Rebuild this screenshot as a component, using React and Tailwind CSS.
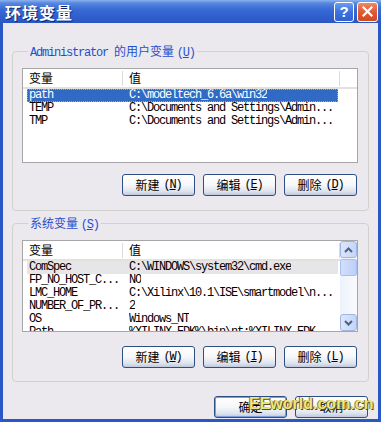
import React from 'react';

const mono = "font-['Liberation_Mono',monospace] text-[12px] tracking-[-1.2px]";
const cjk = "font-['Noto_Sans_CJK_SC',sans-serif] text-[12px]";

const USER_VARS = [
  ['path', 'C:\\modeltech_6.6a\\win32'],
  ['TEMP', 'C:\\Documents and Settings\\Admin...'],
  ['TMP', 'C:\\Documents and Settings\\Admin...'],
];

const SYS_VARS = [
  ['ComSpec', 'C:\\WINDOWS\\system32\\cmd.exe'],
  ['FP_NO_HOST_C...', 'NO'],
  ['LMC_HOME', 'C:\\Xilinx\\10.1\\ISE\\smartmodel\\n...'],
  ['NUMBER_OF_PR...', '2'],
  ['OS', 'Windows_NT'],
  ['Path', '%XILINX_EDK%\\bin\\nt;%XILINX_EDK...'],
];

const Btn = ({ label, k, def }) => (
  <button
    className={`w-[73px] h-[22px] shrink-0 rounded-[3px] border border-[#2d4f85] bg-[linear-gradient(to_bottom,#ffffff_0%,#f6f7f9_50%,#dde3ee_82%,#bfc9dd_100%)] flex items-center justify-center text-black leading-[14px] ${def ? 'shadow-[inset_0_0_0_1px_#7d9ee0]' : ''}`}
  >
    <span className={cjk}>{label}</span>
    {k && (
      <span className={`${mono} ml-[4px]`}>
        (<span className="underline">{k}</span>)
      </span>
    )}
  </button>
);

const Chevron = ({ up }) => (
  <svg width="9" height="6" viewBox="0 0 9 6">
    <polyline
      points={up ? '1,5 4.5,1.5 8,5' : '1,1 4.5,4.5 8,1'}
      fill="none" stroke="#4d6185" strokeWidth="2"
    />
  </svg>
);

const ArrowBtn = ({ up }) => (
  <div className="h-[17px] rounded-[3px] border border-[#9fb6e3] bg-[linear-gradient(to_right,#dbe6fc,#c5d5f8)] flex items-center justify-center">
    <Chevron up={up} />
  </div>
);

const Header = () => (
  <div className="h-[20px] flex items-center bg-white border-b-2 border-[#e2e1dc]">
    <div className="w-[99px] h-full flex items-center pl-[6px]">
      <span className={cjk}>变量</span>
    </div>
    <div className="w-px h-[15px] bg-[#dedcd6]" />
    <div className="w-[216px] h-full flex items-center pl-[6px]">
      <span className={cjk}>值</span>
    </div>
    <div className="w-px h-[15px] bg-[#dedcd6]" />
  </div>
);

const Row = ({ name, value, state }) => (
  <div
    className={`ml-[4px] w-[311px] h-[13px] flex items-center whitespace-nowrap ${mono} leading-[13px] ${
      state === 'sel'
        ? 'bg-[#316ac5] text-white outline-1 outline-dotted outline-[#d9a04c] -outline-offset-1'
        : state === 'dim'
          ? 'bg-[#e6e6e8] text-black'
          : 'text-black'
    }`}
  >
    <span className="w-[102px] pl-[2px] overflow-hidden">{name}</span>
    <span className="overflow-hidden">{value}</span>
  </div>
);

const Group = ({ legend, mt, pb, children }) => (
  <fieldset className={`ml-[9px] mr-[9px] ${mt} ${pb} pl-[9px] pr-[10px] pt-[8px] border border-[#d3d1ce] rounded-[4px]`}>
    <legend className="ml-[6px] px-[2px] leading-[14px] text-[#1f4fcf]">{legend}</legend>
    {children}
  </fieldset>
);

export default function App() {
  return (
    <div className="relative w-[381px] h-[422px] flex flex-col bg-[#ebe9ed] overflow-hidden">
      {/* title bar */}
      <div className="h-[23px] shrink-0 flex items-center bg-[linear-gradient(to_bottom,#8cb2ef_0%,#5587e0_14%,#3769d4_42%,#2e5dcb_80%,#2a56c2_100%)]">
        <span className="pl-[5px] font-['Noto_Sans_CJK_SC',sans-serif] text-[16px] font-bold tracking-[1px] text-white leading-[20px] [text-shadow:1px_1px_0_#0c2470]">
          环境变量
        </span>
        <div className="ml-auto mr-[3px] flex gap-[3px]">
          <div className="w-[20px] h-[20px] rounded-[3px] border border-white bg-[linear-gradient(to_bottom,#6c9cf0,#3e72dc_50%,#2f62d2)] flex items-center justify-center">
            <span className="font-['Liberation_Sans',sans-serif] font-bold text-[15px] leading-none text-white">?</span>
          </div>
          <div className="w-[21px] h-[20px] rounded-[3px] border border-white bg-[linear-gradient(to_bottom,#ec8a66,#e05a34_50%,#cf4a22)] flex items-center justify-center">
            <svg width="11" height="11" viewBox="0 0 11 11">
              <path d="M1.5 1.5 L9.5 9.5 M9.5 1.5 L1.5 9.5" stroke="#fff" strokeWidth="2.2" strokeLinecap="square" />
            </svg>
          </div>
        </div>
      </div>

      {/* body */}
      <div className="flex-1 flex flex-col border-x-[3px] border-b-[3px] border-[#2a56c6]">
        <Group
          mt="mt-[20px]"
          pb="pb-[14px]"
          legend={
            <>
              <span className={mono}>Administrator </span>
              <span className={cjk}>的用户变量 </span>
              <span className={mono}>(<span className="underline">U</span>)</span>
            </>
          }
        >
          <div className="h-[95px] bg-white border border-[#a6a6a6] overflow-hidden">
            <Header />
            {USER_VARS.map(([n, v], i) => (
              <Row key={n} name={n} value={v} state={i === 0 ? 'sel' : null} />
            ))}
          </div>
          <div className="mt-[11px] flex justify-end gap-[8px] mr-[1px]">
            <Btn label="新建" k="N" />
            <Btn label="编辑" k="E" />
            <Btn label="删除" k="D" />
          </div>
        </Group>

        <Group
          mt="mt-[4px]"
          pb="pb-[13px]"
          legend={
            <>
              <span className={cjk}>系统变量 </span>
              <span className={mono}>(<span className="underline">S</span>)</span>
            </>
          }
        >
          <div className="h-[92px] bg-white border border-[#a6a6a6] flex overflow-hidden">
            <div className="flex-1 overflow-hidden">
              <Header />
              {SYS_VARS.map(([n, v], i) => (
                <Row key={n} name={n} value={v} state={i === 0 ? 'dim' : null} />
              ))}
            </div>
            <div className="w-[17px] flex flex-col bg-[linear-gradient(to_right,#eef2fb,#f9fafd)]">
              <ArrowBtn up />
              <div className="h-[17px] mt-px rounded-[2px] border border-[#a9c0ef] bg-[linear-gradient(to_right,#d3e0fb,#bccff7)]" />
              <div className="flex-1" />
              <ArrowBtn />
            </div>
          </div>
          <div className="mt-[14px] flex justify-end gap-[8px] mr-[1px]">
            <Btn label="新建" k="W" />
            <Btn label="编辑" k="I" />
            <Btn label="删除" k="L" />
          </div>
        </Group>

        <div className="mt-[14px] mr-[10px] flex justify-end gap-[8px]">
          <Btn label="确定" def />
          <Btn label="取消" />
        </div>
      </div>

      {/* watermark */}
      <span className="absolute left-[249px] top-[396px] font-['Liberation_Sans',sans-serif] font-bold text-[16px] leading-none text-[#ece77c] [text-shadow:1px_1px_0_#5a4a20,-1px_0_0_#8a7a40]">
        EEworld.com.cn
      </span>
    </div>
  );
}
